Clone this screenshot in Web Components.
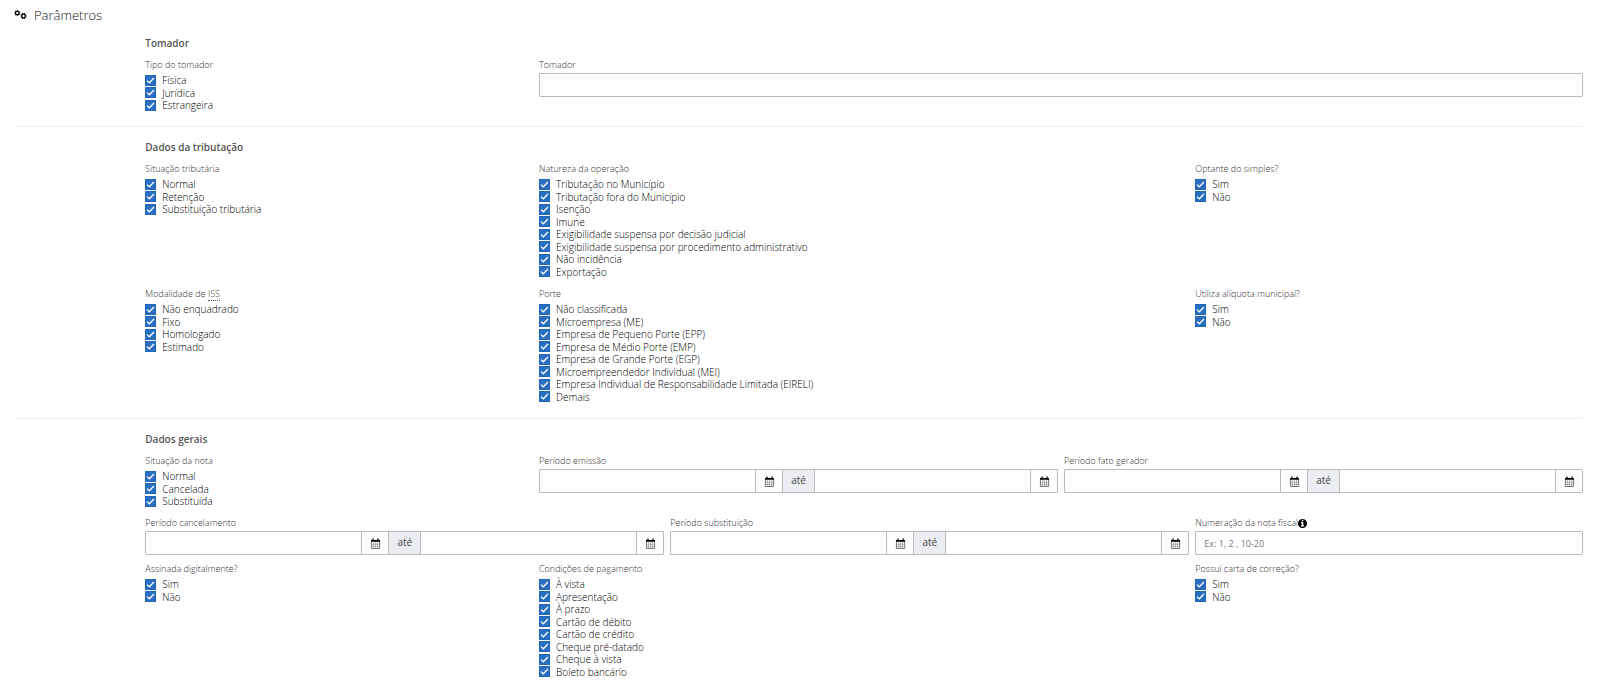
<!DOCTYPE html>
<html lang="pt-BR">
<head>
<meta charset="utf-8">
<title>Parâmetros</title>
<style>
  body { margin: 0; background: #fff; color: #000; font: 10px/12px "Open Sans", sans-serif; }
</style>
</head>
<body>
<filter-page></filter-page>

<template id="tpl-page">
  <style>
    :host { display: block; padding: 7px 17px 8px 14px; }
    h1 { display: flex; align-items: center; gap: 6px; height: 16px; margin: 0 0 12px; font-size: 13px; font-weight: 300; color: #111; }
    abbr { text-decoration: none; border-bottom: 1px dotted #555; }
    .info { display: inline-block; vertical-align: -2px; }
  </style>
  <h1><fa-icon name="cogs" style="--size:14px"></fa-icon>Parâmetros</h1>

  <form-section heading="Tomador">
    <check-group style="--start:2;--span:3" options="Física|Jurídica|Estrangeira">Tipo do tomador</check-group>
    <text-field style="--start:5;--span:8">Tomador</text-field>
  </form-section>

  <form-section heading="Dados da tributação" divided>
    <check-group style="--start:2;--span:3" options="Normal|Retenção|Substituição tributária">Situação tributária</check-group>
    <check-group style="--start:5;--span:5" options="Tributação no Município|Tributação fora do Município|Isenção|Imune|Exigibilidade suspensa por decisão judicial|Exigibilidade suspensa por procedimento administrativo|Não incidência|Exportação">Natureza da operação</check-group>
    <check-group style="--start:10;--span:3" options="Sim|Não">Optante do simples?</check-group>
    <check-group style="--start:2;--span:3" options="Não enquadrado|Fixo|Homologado|Estimado">Modalidade de <abbr>ISS</abbr></check-group>
    <check-group style="--start:5;--span:5" options="Não classificada|Microempresa (ME)|Empresa de Pequeno Porte (EPP)|Empresa de Médio Porte (EMP)|Empresa de Grande Porte (EGP)|Microempreendedor Individual (MEI)|Empresa Individual de Responsabilidade Limitada (EIRELI)|Demais">Porte</check-group>
    <check-group style="--start:10;--span:3" options="Sim|Não">Utiliza alíquota municipal?</check-group>
  </form-section>

  <form-section heading="Dados gerais" divided>
    <check-group style="--start:2;--span:3" options="Normal|Cancelada|Substituída">Situação da nota</check-group>
    <date-range style="--start:5;--span:4">Período emissão</date-range>
    <date-range style="--start:9;--span:4">Período fato gerador</date-range>
    <date-range style="--start:2;--span:4">Período cancelamento</date-range>
    <date-range style="--start:6;--span:4">Período substituição</date-range>
    <text-field style="--start:10;--span:3" placeholder="Ex: 1, 2 , 10-20">Numeração da nota fiscal<fa-icon class="info" name="info" style="--size:9px"></fa-icon></text-field>
    <check-group style="--start:2;--span:3" options="Sim|Não">Assinada digitalmente?</check-group>
    <check-group style="--start:5;--span:5" options="À vista|Apresentação|À prazo|Cartão de débito|Cartão de crédito|Cheque pré-datado|Cheque à vista|Boleto bancário">Condições de pagamento</check-group>
    <check-group style="--start:10;--span:3" options="Sim|Não">Possui carta de correção?</check-group>
  </form-section>
</template>

<template id="tpl-section">
  <style>
    :host { display: block; }
    :host([divided]) { margin-top: 13px; padding-top: 12px; border-top: 1px solid #eee; }
    .grid { display: grid; grid-template-columns: repeat(12, minmax(0, 1fr)); gap: 6px; align-items: start; }
    h2 { grid-column: 2 / -1; margin: 0; font-size: 10px; line-height: 16px; font-weight: 650; color: #555; }
    ::slotted(*) { grid-column: var(--start) / span var(--span); }
  </style>
  <div class="grid"><h2></h2><slot></slot></div>
</template>

<template id="tpl-checks">
  <style>
    :host { display: block; }
    fieldset { margin: 0; padding: 0 0 2px; border: 0; min-width: 0; }
    legend { display: block; padding: 0; margin: 0 0 1px; font-size: 9px; line-height: 16px; font-weight: 350; color: #333; }
    label { display: flex; align-items: center; gap: 6px; height: 12px; line-height: 12px; font-weight: 350; white-space: nowrap; }
    label:nth-of-type(even) { height: 13px; }
    input { appearance: none; flex: none; width: 11px; height: 11px; margin: 0; border: 1px solid #1f66bb; background: #fff; }
    input:checked { background: #2b6fc2 url("data:image/svg+xml,%3Csvg xmlns='http://www.w3.org/2000/svg' viewBox='0 0 9 9'%3E%3Cpath d='M1 4.6 3.3 6.8 8 2' fill='none' stroke='white' stroke-width='1.3'/%3E%3C/svg%3E") center/9px; }
  </style>
  <fieldset><legend><slot></slot></legend></fieldset>
</template>

<template id="tpl-text">
  <style>
    :host { display: block; }
    label { display: block; height: 16px; font-size: 9px; line-height: 16px; font-weight: 350; color: #333; }
    input { display: block; box-sizing: border-box; width: 100%; height: 24px; padding: 0 8px; border: 1px solid #bbb; border-radius: 1px; background: #fff; font: inherit; font-size: 9px; color: #333; }
    input::placeholder { color: #777; opacity: 1; }
  </style>
  <label for="field"><slot></slot></label>
  <input id="field" type="text">
</template>

<template id="tpl-range">
  <style>
    :host { display: block; }
    label { display: block; height: 16px; font-size: 9px; line-height: 16px; font-weight: 350; color: #333; }
    .group { display: flex; box-sizing: border-box; height: 24px; border: 1px solid #bbb; border-radius: 1px; }
    input { flex: 1; min-width: 0; padding: 0 8px; border: 0; background: #fff; font: inherit; }
    button { box-sizing: border-box; width: 27px; display: flex; align-items: center; justify-content: center; padding: 0; border: 0; border-left: 1px solid #bbb; background: #fff; }
    span { box-sizing: border-box; width: 33px; border: solid #bbb; border-width: 0 1px; background: #ebedf2; color: #444; line-height: 20px; text-align: center; }
  </style>
  <label for="from"><slot></slot></label>
  <div class="group">
    <input id="from" type="text"><button type="button" aria-label="Abrir calendário inicial"><fa-icon name="calendar" style="--size:11px"></fa-icon></button>
    <span>até</span>
    <input type="text" aria-label="Data final"><button type="button" aria-label="Abrir calendário final"><fa-icon name="calendar" style="--size:11px"></fa-icon></button>
  </div>
</template>

<script>
  const clone = (el, id) => {
    const root = el.attachShadow({ mode: "open" });
    root.append(document.getElementById(id).content.cloneNode(true));
    return root;
  };

  const gear = (cx, cy, r, turn) => {
    let teeth = "";
    for (let i = 0; i < 8; i++) teeth += `<rect x="${cx - r * .24}" y="${cy - r * 1.32}" width="${r * .48}" height="${r * .6}" transform="rotate(${i * 45 + turn} ${cx} ${cy})"/>`;
    return `${teeth}<circle cx="${cx}" cy="${cy}" r="${r * .8}" fill="none" stroke="currentColor" stroke-width="${r * .55}"/>`;
  };
  const ICONS = {
    cogs: ["0 0 14 14", gear(3.3, 5, 2.2, 0) + gear(9.5, 8, 2.3, 22)],
    calendar: ["0 0 11 11", '<path d="M1.4 2.5h8.2v8H1.4z" fill="#fff" stroke="#555" stroke-width=".8"/><path d="M3.5 4v6M5.5 4v6M7.5 4v6M1 6.3h9M1 8.4h9" stroke="#777" stroke-width=".5"/><path d="M1 2h1.3V.6h1.3V2h3.8V.6h1.3V2H10v1.7H1z"/>'],
    info: ["128 128 1536 1536", '<path d="M1152 1376v-160q0-14-9-23t-23-9h-96v-512q0-14-9-23t-23-9h-320q-14 0-23 9t-9 23v160q0 14 9 23t23 9h96v320h-96q-14 0-23 9t-9 23v160q0 14 9 23t23 9h448q14 0 23-9t9-23zm-128-896v-160q0-14-9-23t-23-9h-192q-14 0-23 9t-9 23v160q0 14 9 23t23 9h192q14 0 23-9t9-23zm640 416q0 209-103 385.5t-279.5 279.5-385.5 103-385.5-103-279.5-279.5-103-385.5 103-385.5 279.5-279.5 385.5-103 385.5 103 279.5 279.5 103 385.5z"/>']
  };

  customElements.define("fa-icon", class extends HTMLElement {
    connectedCallback() {
      if (this.shadowRoot) return;
      const [box, body] = ICONS[this.getAttribute("name")];
      this.attachShadow({ mode: "open" }).innerHTML =
        `<style>:host{display:block;width:var(--size);height:var(--size);color:#000}svg{display:block;width:100%;height:100%}</style>
         <svg viewBox="${box}" fill="currentColor" aria-hidden="true">${body}</svg>`;
    }
  });

  customElements.define("check-group", class extends HTMLElement {
    connectedCallback() {
      if (this.shadowRoot) return;
      const set = clone(this, "tpl-checks").querySelector("fieldset");
      for (const text of this.getAttribute("options").split("|")) {
        const label = document.createElement("label");
        const box = document.createElement("input");
        box.type = "checkbox";
        box.defaultChecked = true;
        label.append(box, text);
        set.append(label);
      }
    }
  });

  customElements.define("text-field", class extends HTMLElement {
    connectedCallback() {
      if (this.shadowRoot) return;
      clone(this, "tpl-text").querySelector("input").placeholder = this.getAttribute("placeholder") || "";
    }
  });

  customElements.define("date-range", class extends HTMLElement {
    connectedCallback() { if (!this.shadowRoot) clone(this, "tpl-range"); }
  });

  customElements.define("form-section", class extends HTMLElement {
    connectedCallback() {
      if (this.shadowRoot) return;
      clone(this, "tpl-section").querySelector("h2").textContent = this.getAttribute("heading");
    }
  });

  customElements.define("filter-page", class extends HTMLElement {
    connectedCallback() { if (!this.shadowRoot) clone(this, "tpl-page"); }
  });
</script>
</body>
</html>
